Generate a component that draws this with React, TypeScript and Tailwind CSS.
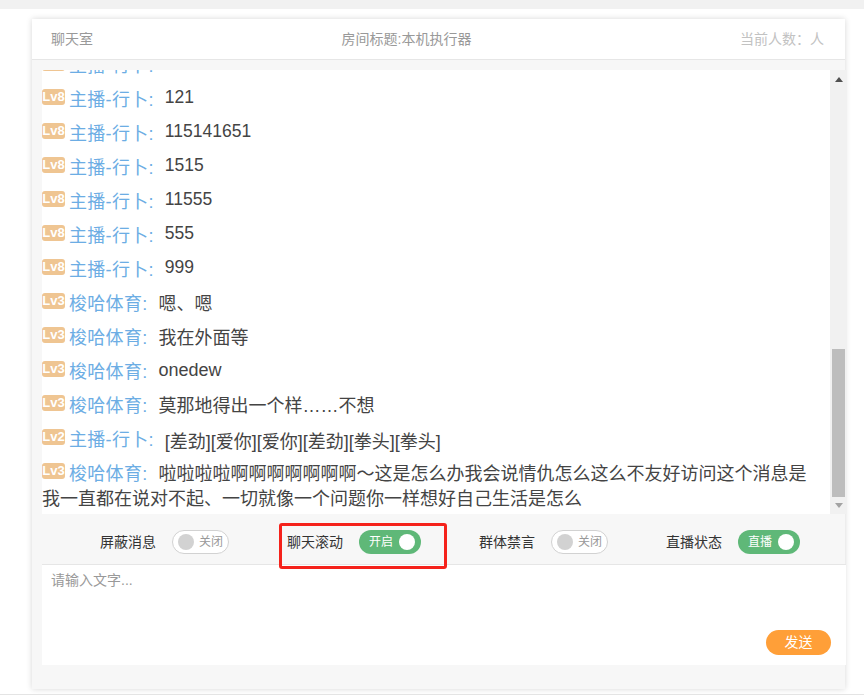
const cjk = "font-['Liberation_Sans','Noto_Sans_CJK_SC',sans-serif]";

type Msg = { lv: number; name: string; text: string };

const messages: Msg[] = [
  { lv: 8, name: "主播-行卜", text: "12" },
  { lv: 8, name: "主播-行卜", text: "121" },
  { lv: 8, name: "主播-行卜", text: "115141651" },
  { lv: 8, name: "主播-行卜", text: "1515" },
  { lv: 8, name: "主播-行卜", text: "11555" },
  { lv: 8, name: "主播-行卜", text: "555" },
  { lv: 8, name: "主播-行卜", text: "999" },
  { lv: 3, name: "梭哈体育", text: "嗯、嗯" },
  { lv: 3, name: "梭哈体育", text: "我在外面等" },
  { lv: 3, name: "梭哈体育", text: "onedew" },
  { lv: 3, name: "梭哈体育", text: "莫那地得出一个样……不想" },
  { lv: 2, name: "主播-行卜", text: "[差劲][爱你][爱你][差劲][拳头][拳头]" },
  {
    lv: 3,
    name: "梭哈体育",
    text: "啦啦啦啦啊啊啊啊啊啊啊～这是怎么办我会说情仇怎么这么不友好访问这个消息是我一直都在说对不起、一切就像一个问题你一样想好自己生活是怎么",
  },
];

// latin text sits a little higher than the names, the bracket emotes a little lower
function textClass(text: string) {
  if (/^\d+$/.test(text)) return "relative -top-[3px] text-[17.5px]";
  if (/^[a-z]+$/.test(text)) return "relative -top-[2px]";
  if (text.startsWith("[")) return "relative top-[2px]";
  return "";
}

function MessageRow({ lv, name, text }: Msg) {
  return (
    <p className="mb-[9px] break-all pr-[20px] text-[18px] leading-[25px] text-[#444] last:mb-[2px]">
      <span className="relative -top-[4px] mr-[4px] inline-block h-[16px] w-[23px] rounded-[3px] bg-[#efc592] text-center align-middle text-[13px] leading-[16px] font-bold text-white">
        Lv{lv}
      </span>
      <span className="mr-[11px] tracking-[0.3px] text-[#6cade4]">{name}:</span>
      <span className={textClass(text)}>{text}</span>
    </p>
  );
}

function Toggle({ on, label }: { on: boolean; label: string }) {
  if (on) {
    return (
      <span className="flex h-[24px] w-[62px] items-center justify-between rounded-full bg-[#5fb878] pr-[6px] pl-[10px] text-[12px] text-white">
        {label}
        <span className="h-[16px] w-[16px] rounded-full bg-white" />
      </span>
    );
  }
  return (
    <span className="flex h-[24px] w-[57px] items-center gap-[5px] rounded-full border border-[#d2d2d2] bg-white pl-[5px] text-[12px] text-[#999]">
      <span className="h-[16px] w-[16px] rounded-full bg-[#d2d2d2]" />
      {label}
    </span>
  );
}

function Control({ title, on, label, boxed }: { title: string; on: boolean; label: string; boxed?: boolean }) {
  return (
    <div className="relative flex items-center gap-[16px] text-[14px] text-[#333]">
      <span>{title}</span>
      <Toggle on={on} label={label} />
      {boxed && (
        <span className="absolute -top-[7px] -right-[26px] -bottom-[15px] -left-[8px] rounded-[3px] border-[3px] border-[#f5221b]" />
      )}
    </div>
  );
}

export default function App() {
  return (
    <div className={`h-[695px] w-[864px] overflow-hidden border-b border-[#e4e4e4] bg-white ${cjk}`}>
      <div className="h-[9px] bg-[#f1f1f1]" />
      <div className="mt-[10px] ml-[32px] flex h-[670px] w-[813px] flex-col bg-[#f7f7f7] shadow-[0_0_6px_rgba(0,0,0,0.16)]">
        <header className="flex h-[41px] shrink-0 items-center justify-between border-b border-[#e6e6e6] bg-white pt-[1px] pr-[21px] pl-[19px] text-[14px] text-[#999]">
          <span>聊天室</span>
          <span className="mr-[20px]">房间标题:本机执行器</span>
          <span className="text-[#c2c2c2]">当前人数：人</span>
        </header>

        <div className="mt-[10px] ml-[10px] flex h-[444px] w-[805px] shrink-0">
          <div className="flex w-[788px] flex-col justify-end overflow-hidden bg-white">
            {messages.map((m, i) => (
              <MessageRow key={i} {...m} />
            ))}
          </div>
          <div className="flex w-[17px] flex-col items-center bg-[#f1f1f1]">
            <svg className="mt-[7px]" width="8" height="5" viewBox="0 0 8 5">
              <path d="M4 0 8 5H0z" fill="#505050" />
            </svg>
            <div className="mt-[267px] h-[148px] w-[13px] bg-[#bdbdbd]" />
            <svg className="mt-[6px]" width="8" height="5" viewBox="0 0 8 5">
              <path d="M0 0h8L4 5z" fill="#a3a3a3" />
            </svg>
          </div>
        </div>

        <div className="ml-[10px] flex h-[50px] shrink-0 items-center gap-[58px] pt-[6px] pl-[58px]">
          <Control title="屏蔽消息" on={false} label="关闭" />
          <Control title="聊天滚动" on label="开启" boxed />
          <Control title="群体禁言" on={false} label="关闭" />
          <Control title="直播状态" on label="直播" />
        </div>

        <div className="ml-[10px] flex h-[101px] w-[804px] shrink-0 flex-col border-t border-[#e6e6e6] bg-white pt-[6px] pr-[10px] pl-[9px]">
          <span className="text-[14px] leading-[18px] text-[#999]">请输入文字...</span>
          <button className="mt-auto mr-[5px] mb-[10px] h-[25px] w-[65px] self-end rounded-full bg-[#ff9f38] text-[14px] text-white">
            发送
          </button>
        </div>
      </div>
    </div>
  );
}
